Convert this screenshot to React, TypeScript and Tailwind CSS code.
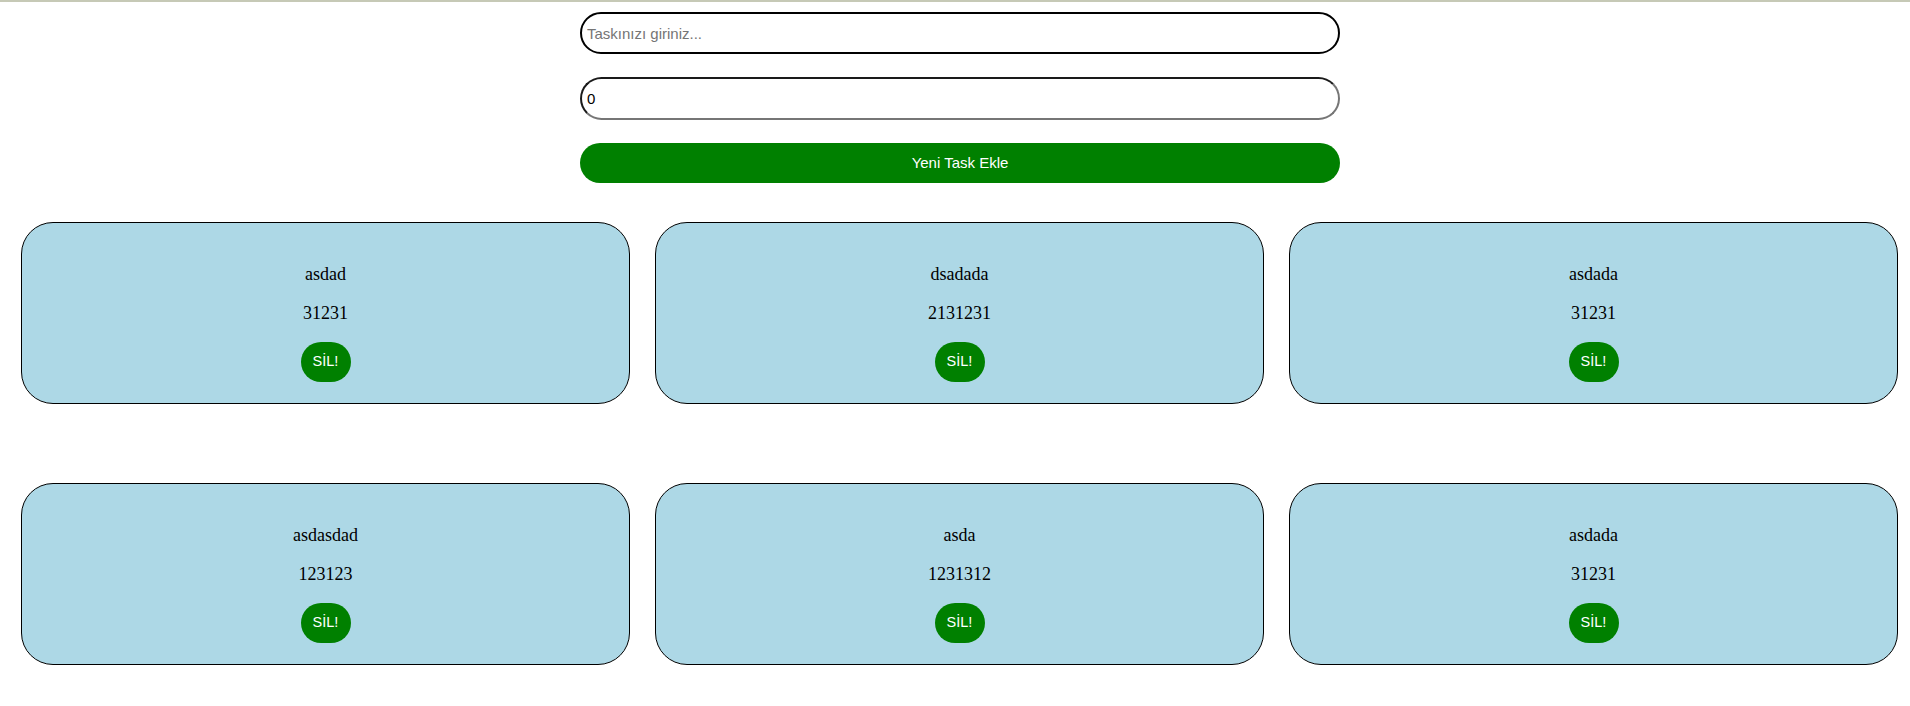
import React from "react";

const tasks = [
  { name: "asdad", num: "31231" },
  { name: "dsadada", num: "2131231" },
  { name: "asdada", num: "31231" },
  { name: "asdasdad", num: "123123" },
  { name: "asda", num: "1231312" },
  { name: "asdada", num: "31231" },
];

export default function App() {
  return (
    <div className="w-[1910px] h-[706px] bg-white overflow-hidden">
      <div className="h-[2px] bg-[#c6c9b6]" />
      <div className="ml-[580px] w-[760px] pt-[10px] flex flex-col" style={{ fontFamily: '"Liberation Sans", Arial, sans-serif' }}>
        <input
          className="h-[42px] w-full rounded-full border-2 border-black pl-[5px] text-[15px] text-black placeholder:text-[#757575] outline-none bg-white"
          placeholder="Taskınızı giriniz..."
          readOnly
        />
        <input
          className="mt-[23px] h-[43px] w-full rounded-full border-2 border-t-[#1a1a1a] border-l-[#1a1a1a] border-b-[#767676] border-r-[#767676] pl-[5px] text-[15px] text-black outline-none bg-white"
          value="0"
          readOnly
        />
        <button className="mt-[23px] h-[40px] w-full rounded-full bg-[#008000] text-white text-[15px]">
          Yeni Task Ekle
        </button>
      </div>
      <div className="mt-[39px] pl-[21px] flex flex-wrap gap-x-[25px] gap-y-[79px]">
        {tasks.map((t, i) => (
          <div
            key={i}
            className="w-[609px] h-[182px] rounded-[32px] border border-black bg-[#add8e6] flex flex-col items-center pt-[41px]"
          >
            <p className="text-[18px] leading-[21px] text-black" style={{ fontFamily: '"Liberation Serif", "Times New Roman", serif' }}>
              {t.name}
            </p>
            <p className="mt-[18px] text-[18px] leading-[21px] text-black" style={{ fontFamily: '"Liberation Serif", "Times New Roman", serif' }}>
              {t.num}
            </p>
            <button
              className="mt-[18px] w-[50px] h-[40px] rounded-[20px] bg-[#008000] text-white text-[14.5px] flex items-center justify-center"
              style={{ fontFamily: '"Liberation Sans", Arial, sans-serif' }}
            >
              SİL!
            </button>
          </div>
        ))}
      </div>
    </div>
  );
}
